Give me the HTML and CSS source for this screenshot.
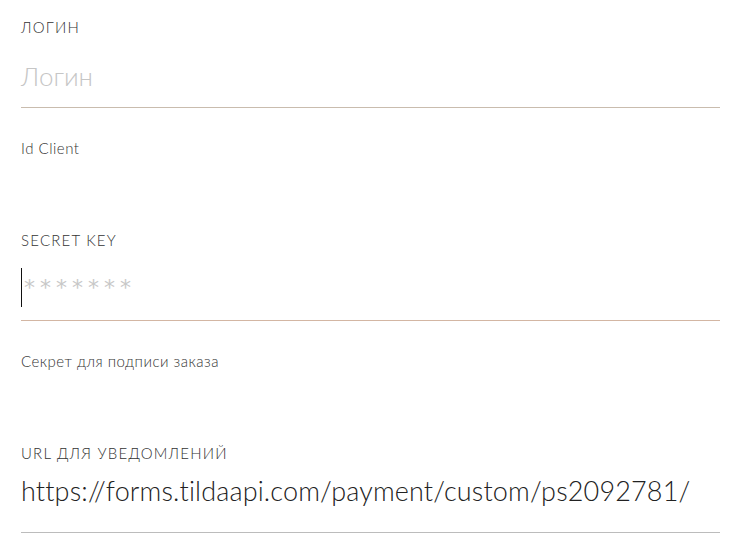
FILE: index.html
```html
<!DOCTYPE html>
<html>
  <head>
    <title>Настройки платежной системы</title>
    <link rel="stylesheet" href="styles.css">
  </head>
  <body class="page">
    <form class="settings">
      <div class="field">
        <div class="field-label">Логин</div>
        <div class="field-input">
          <span class="placeholder">Логин</span>
        </div>
        <div class="field-hint">Id Client</div>
      </div>

      <div class="field">
        <div class="field-label">Secret key</div>
        <div class="field-input field-input-secret">
          <span class="caret"></span>
          <span class="placeholder placeholder-stars">*******</span>
        </div>
        <div class="field-hint">Секрет для подписи заказа</div>
      </div>

      <div class="field">
        <div class="field-label">URL для уведомлений</div>
        <div class="field-input field-input-url">
          <span class="value">https://forms.tildaapi.com/payment/custom/ps2092781/</span>
        </div>
      </div>
    </form>
  </body>
</html>
```

FILE: styles.css
```css
body {
  margin: 0;
  background-color: #ffffff;
  font-family: "Lato", "Open Sans", sans-serif;
  color: #222222;
}
.settings {
  width: 699px;
  padding: 17px 0 0 21px;
}
.field {
  margin-bottom: 72px;
}
.field:last-child {
  margin-bottom: 0;
}
.field-label {
  height: 20px;
  line-height: 20px;
  font-size: 15px;
  font-weight: 300;
  letter-spacing: 1.2px;
  text-transform: uppercase;
  color: #333333;
}
.field-input {
  height: 70px;
  border-bottom: 1px solid #c9bcae;
  display: flex;
  align-items: flex-start;
}
.field-input-secret {
  border-bottom-color: #d3b6a3;
  padding-top: 18px;
  height: 52px;
}
.field-input-url {
  border-bottom-color: #bcbcbc;
  padding-top: 10px;
  height: 59px;
}
.placeholder {
  font-size: 26px;
  font-weight: 300;
  line-height: 30px;
  color: #c6c6c6;
  padding-top: 24px;
}
.placeholder-stars {
  padding-top: 1px;
  padding-left: 2px;
  font-family: "DejaVu Sans", sans-serif;
  font-size: 22px;
  font-weight: 400;
  line-height: 38px;
  letter-spacing: 5px;
  color: #c8c8c8;
}
.caret {
  width: 1px;
  height: 39px;
  background-color: #111111;
}
.value {
  font-size: 27px;
  font-weight: 300;
  line-height: 36px;
  letter-spacing: 0.15px;
  color: #222222;
}
.field-hint {
  margin-top: 30px;
  height: 20px;
  line-height: 20px;
  font-size: 15px;
  font-weight: 300;
  letter-spacing: 0.5px;
  color: #333333;
}
```
